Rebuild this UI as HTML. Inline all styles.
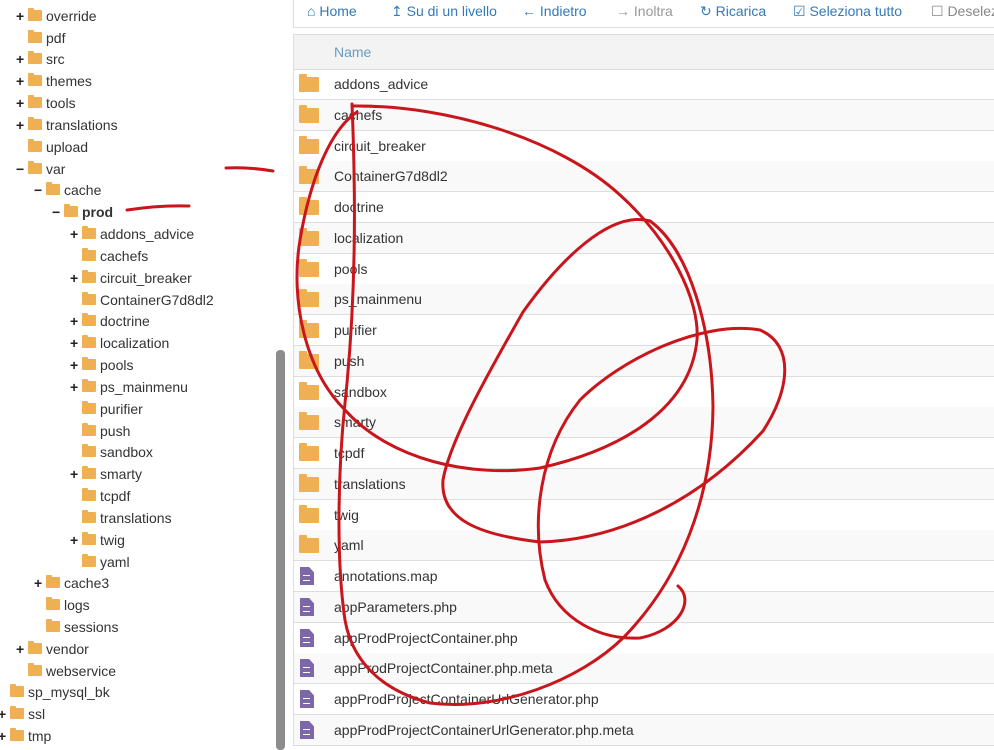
<!DOCTYPE html>
<html><head><meta charset="utf-8"><style>
body{margin:0;width:994px;height:750px;overflow:hidden;background:#fff;position:relative;font-family:"Liberation Sans",sans-serif;}
.t{position:absolute;height:22px;line-height:22px;font-size:14px;color:#333;white-space:nowrap}
.t i{position:absolute;top:5px;left:0;width:14px;height:11px;background:#eeb053;border-radius:1px}
.t i:before{content:"";position:absolute;left:0;top:-2px;width:6px;height:3px;background:#eeb053;border-radius:1px 1px 0 0}
.t b.s{position:absolute;left:-12px;top:0;font-weight:bold;color:#222;font-size:14px}
.t span{position:absolute;left:18px}
.sb{position:absolute;left:276px;top:350px;width:9px;height:400px;background:#8c8c8c;border-radius:4px}
.tb{position:absolute;left:293px;top:-2px;width:710px;height:29px;border:1px solid #ddd;border-top:none;font-size:14px;color:#337ab7;line-height:26px;font-family:"Liberation Sans Narrow","Liberation Sans",sans-serif;white-space:nowrap}
.tb span{position:absolute;top:0;white-space:nowrap}
.hd{position:absolute;left:293px;top:34px;width:710px;height:34px;background:#f3f3f3;border:1px solid #ddd;color:#6a9bc3;font-size:14px;line-height:34px}
.r{position:absolute;left:293px;width:710px;height:30px;border-bottom:1px solid #ddd;border-left:1px solid #ddd;font-size:14px;color:#333;line-height:30px}
.r.g{background:#f9f9f9}
.r span{position:absolute;left:40px}
.r i.f{position:absolute;left:5px;top:8px;width:20px;height:15px;background:#eeb053;border-radius:1px}
.r i.f:before{content:"";position:absolute;left:0;top:-3px;width:8px;height:4px;background:#eeb053;border-radius:1px 1px 0 0}
.r i.p{position:absolute;left:6px;top:6px;width:14px;height:18px;background:#7c68a8;clip-path:polygon(0 0,65% 0,100% 30%,100% 100%,0 100%)}
.r i.p:after{content:"";position:absolute;left:3px;top:8px;width:7px;height:6px;border-top:1.5px solid #fff;border-bottom:1.5px solid #fff;box-sizing:border-box}
</style></head><body>
<div class="t" style="left:28px;top:5px"><b class="s">+</b><i></i><span>override</span></div>
<div class="t" style="left:28px;top:27px"><i></i><span>pdf</span></div>
<div class="t" style="left:28px;top:48px"><b class="s">+</b><i></i><span>src</span></div>
<div class="t" style="left:28px;top:70px"><b class="s">+</b><i></i><span>themes</span></div>
<div class="t" style="left:28px;top:92px"><b class="s">+</b><i></i><span>tools</span></div>
<div class="t" style="left:28px;top:114px"><b class="s">+</b><i></i><span>translations</span></div>
<div class="t" style="left:28px;top:136px"><i></i><span>upload</span></div>
<div class="t" style="left:28px;top:158px"><b class="s">−</b><i></i><span>var</span></div>
<div class="t" style="left:46px;top:179px"><b class="s">−</b><i></i><span>cache</span></div>
<div class="t" style="left:64px;top:201px"><b class="s">−</b><i></i><span style="font-weight:bold">prod</span></div>
<div class="t" style="left:82px;top:223px"><b class="s">+</b><i></i><span>addons_advice</span></div>
<div class="t" style="left:82px;top:245px"><i></i><span>cachefs</span></div>
<div class="t" style="left:82px;top:267px"><b class="s">+</b><i></i><span>circuit_breaker</span></div>
<div class="t" style="left:82px;top:289px"><i></i><span>ContainerG7d8dl2</span></div>
<div class="t" style="left:82px;top:310px"><b class="s">+</b><i></i><span>doctrine</span></div>
<div class="t" style="left:82px;top:332px"><b class="s">+</b><i></i><span>localization</span></div>
<div class="t" style="left:82px;top:354px"><b class="s">+</b><i></i><span>pools</span></div>
<div class="t" style="left:82px;top:376px"><b class="s">+</b><i></i><span>ps_mainmenu</span></div>
<div class="t" style="left:82px;top:398px"><i></i><span>purifier</span></div>
<div class="t" style="left:82px;top:420px"><i></i><span>push</span></div>
<div class="t" style="left:82px;top:441px"><i></i><span>sandbox</span></div>
<div class="t" style="left:82px;top:463px"><b class="s">+</b><i></i><span>smarty</span></div>
<div class="t" style="left:82px;top:485px"><i></i><span>tcpdf</span></div>
<div class="t" style="left:82px;top:507px"><i></i><span>translations</span></div>
<div class="t" style="left:82px;top:529px"><b class="s">+</b><i></i><span>twig</span></div>
<div class="t" style="left:82px;top:551px"><i></i><span>yaml</span></div>
<div class="t" style="left:46px;top:572px"><b class="s">+</b><i></i><span>cache3</span></div>
<div class="t" style="left:46px;top:594px"><i></i><span>logs</span></div>
<div class="t" style="left:46px;top:616px"><i></i><span>sessions</span></div>
<div class="t" style="left:28px;top:638px"><b class="s">+</b><i></i><span>vendor</span></div>
<div class="t" style="left:28px;top:660px"><i></i><span>webservice</span></div>
<div class="t" style="left:10px;top:681px"><i></i><span>sp_mysql_bk</span></div>
<div class="t" style="left:10px;top:703px"><b class="s">+</b><i></i><span>ssl</span></div>
<div class="t" style="left:10px;top:725px"><b class="s">+</b><i></i><span>tmp</span></div>
<div class="sb"></div>

<div class="tb">
<span style="left:13px">⌂ Home</span>
<span style="left:97px">↥ Su di un livello</span>
<span style="left:228px">← Indietro</span>
<span style="left:322px;color:#999">→ Inoltra</span>
<span style="left:406px">↻ Ricarica</span>
<span style="left:499px">☑ Seleziona tutto</span>
<span style="left:637px;color:#888">☐ Deseleziona</span>
</div>
<div class="hd"><span style="position:absolute;left:40px">Name</span></div>
<div style="position:absolute;left:0;top:69px;width:994px">
<div class="r" style="top:0"><i class="f"></i><span>addons_advice</span></div>
<div class="r g" style="top:31px"><i class="f"></i><span>cachefs</span></div>
<div class="r" style="top:62px"><i class="f"></i><span>circuit_breaker</span></div>
<div class="r g" style="top:92px"><i class="f"></i><span>ContainerG7d8dl2</span></div>
<div class="r" style="top:123px"><i class="f"></i><span>doctrine</span></div>
<div class="r g" style="top:154px"><i class="f"></i><span>localization</span></div>
<div class="r" style="top:185px"><i class="f"></i><span>pools</span></div>
<div class="r g" style="top:215px"><i class="f"></i><span>ps_mainmenu</span></div>
<div class="r" style="top:246px"><i class="f"></i><span>purifier</span></div>
<div class="r g" style="top:277px"><i class="f"></i><span>push</span></div>
<div class="r" style="top:308px"><i class="f"></i><span>sandbox</span></div>
<div class="r g" style="top:338px"><i class="f"></i><span>smarty</span></div>
<div class="r" style="top:369px"><i class="f"></i><span>tcpdf</span></div>
<div class="r g" style="top:400px"><i class="f"></i><span>translations</span></div>
<div class="r" style="top:431px"><i class="f"></i><span>twig</span></div>
<div class="r g" style="top:461px"><i class="f"></i><span>yaml</span></div>
<div class="r" style="top:492px"><i class="p"></i><span>annotations.map</span></div>
<div class="r g" style="top:523px"><i class="p"></i><span>appParameters.php</span></div>
<div class="r" style="top:554px"><i class="p"></i><span>appProdProjectContainer.php</span></div>
<div class="r g" style="top:584px"><i class="p"></i><span>appProdProjectContainer.php.meta</span></div>
<div class="r" style="top:615px"><i class="p"></i><span>appProdProjectContainerUrlGenerator.php</span></div>
<div class="r g" style="top:646px"><i class="p"></i><span>appProdProjectContainerUrlGenerator.php.meta</span></div>
</div>

<svg width="994" height="750" style="position:absolute;left:0;top:0" fill="none" stroke="#c8161c" stroke-width="3" stroke-linecap="round" stroke-linejoin="round">
<path d="M226 168 Q250 167 273 171"/>
<path d="M127 210 Q160 205 189 206"/>
<path d="M352 104 C356 200 356 300 345 403 C338 470 336 560 345 620 C352 660 380 690 430 703 C500 712 580 680 623 638 C680 580 712 500 713 407 C712 330 690 250 650 221 C610 210 560 260 523 312 C490 370 450 440 443 480 C440 520 480 535 540 542 C620 540 700 500 763 431 C790 390 795 345 760 330 C700 320 620 360 580 400 C540 450 530 520 545 580 C560 620 600 640 640 638 C680 630 695 600 678 586"/>
<path d="M353 106 C450 105 560 140 620 195 C670 240 700 300 697 340 C690 410 620 450 540 468 C470 478 390 460 345 410 C305 370 290 300 300 240 C310 180 330 130 357 112"/>
</svg>
</body></html>
